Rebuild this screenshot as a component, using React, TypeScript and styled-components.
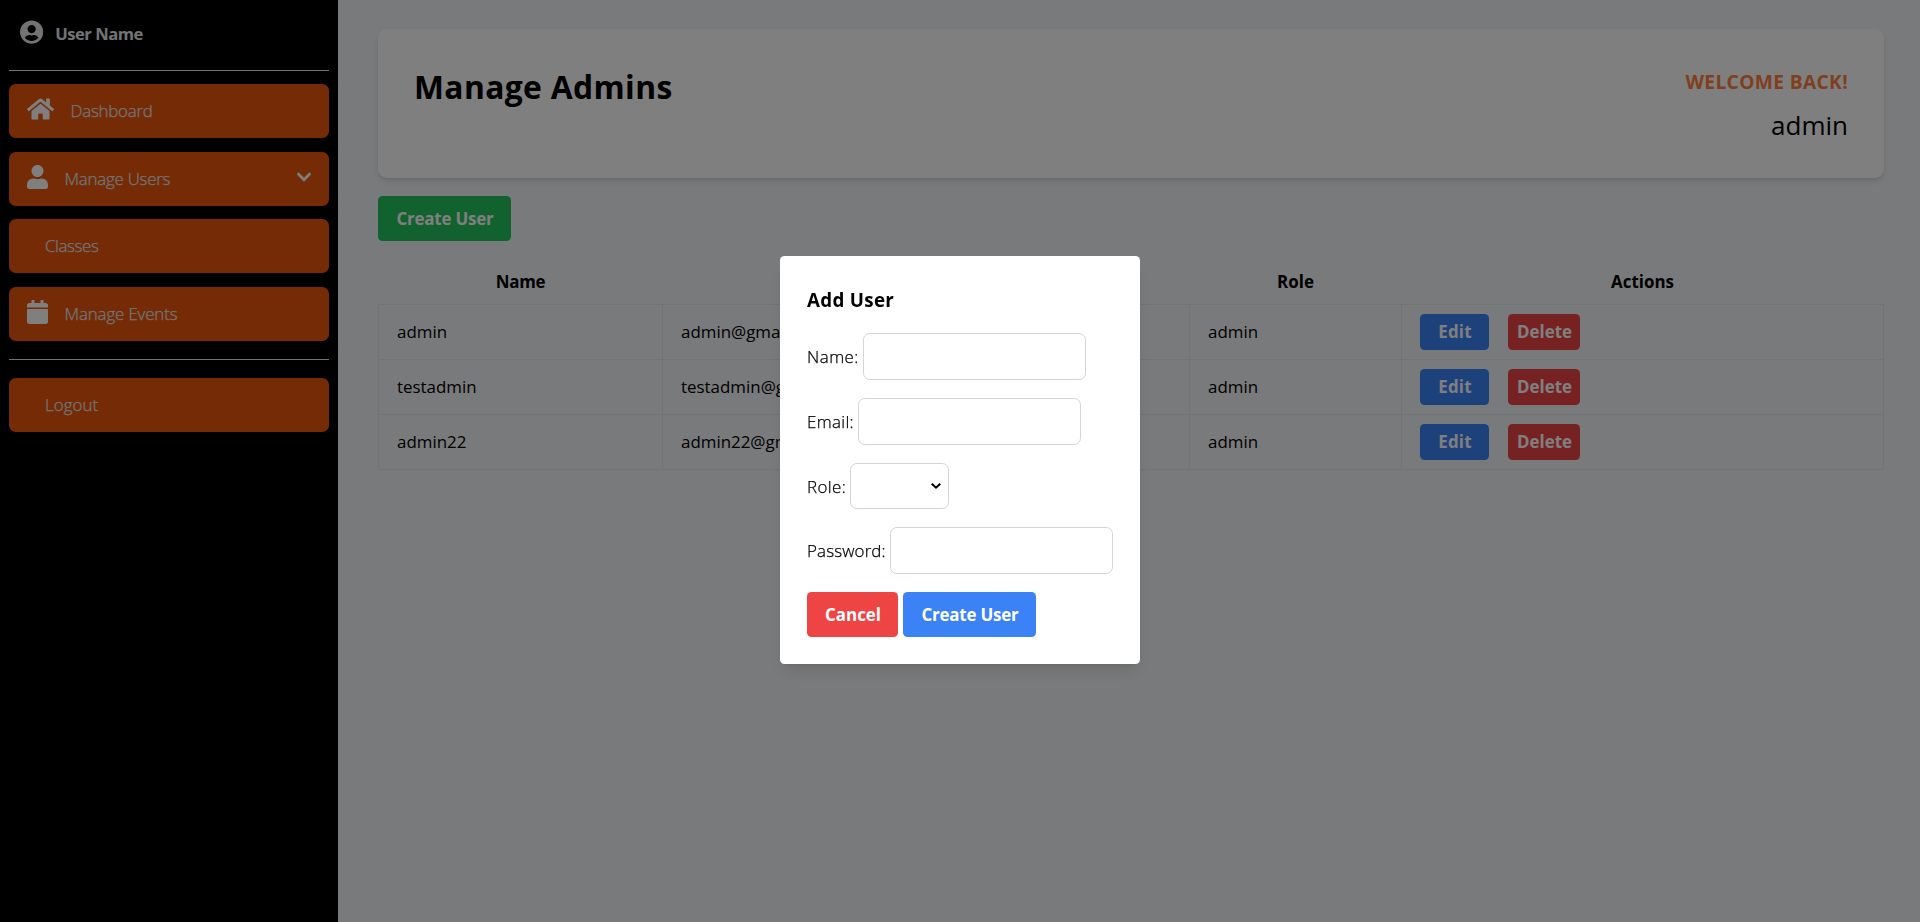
import React from "react";
import styled, { createGlobalStyle } from "styled-components";
import { FaCalendar, FaChevronDown, FaHome, FaUser, FaUserCircle } from "react-icons/fa";

const GlobalStyle = createGlobalStyle`
  *, *::before, *::after { box-sizing: border-box; }
  body {
    margin: 0;
    background: #f3f4f6;
    color: #000;
    font: 400 16.92px/27px "Open Sans", "Noto Sans", sans-serif;
  }
  h1, h2, h3, p { margin: 0; }
  button { font: inherit; }
`;

const Page = styled.div`
  display: flex;
  width: 100%;
  height: 100vh;
  overflow: hidden;
`;

/* Letter spacing in pixels, set per label. */
const Tracked = styled.span<{ $track?: number }>`
  letter-spacing: ${({ $track = 0 }) => $track}px;
  white-space: nowrap;
`;

const Sidebar = styled.aside`
  display: flex;
  flex-direction: column;
  flex: none;
  width: 338px;
  padding: 9px;
  background: #000;
  color: #e5e7eb;
`;

const Profile = styled.div`
  display: flex;
  align-items: flex-start;
  height: 61px;
  padding: 11px 0 0 11px;
  font-size: 16.6px;
  font-weight: 700;

  svg {
    width: 23.25px;
    height: 24px;
    margin: 0 12px 0 0;
  }
`;

const Divider = styled.hr<{ $top: number; $bottom: number }>`
  flex: none;
  width: 100%;
  height: 1px;
  margin: ${({ $top, $bottom }) => `${$top}px 0 ${$bottom}px`};
  border: 0;
  background: #e5e7eb;
`;

const NavList = styled.nav`
  display: flex;
  flex-direction: column;
  gap: 13.5px;
`;

const NavItem = styled.a<{ $indent?: boolean }>`
  display: flex;
  align-items: center;
  height: 54px;
  padding: 0 18px 0.5px ${({ $indent }) => ($indent ? 36 : 18)}px;
  border-radius: 6.75px;
  background: #ea580c;
  font-weight: 300;
  -webkit-text-stroke: 0.25px currentColor;
`;

const NavIcon = styled.span<{ $width?: number }>`
  display: flex;
  margin: 0 16.5px 3px 0;
  color: #fff;

  svg {
    width: ${({ $width = 21 }) => $width}px;
    height: 24px;
  }
`;

const NavCaret = styled.span`
  display: flex;
  margin: 0 0 2px auto;
  color: #fff;

  svg {
    width: 14px;
    height: 16px;
    stroke: currentColor;
    stroke-width: 16px;
  }
`;

const Main = styled.main`
  flex: 1;
  padding: 29px 36px 0 40px;
`;

const HeaderCard = styled.header`
  display: flex;
  justify-content: space-between;
  height: 149px;
  padding: 36px;
  border-radius: 9px;
  background: #fff;
  box-shadow: 0 4px 6px -1px rgba(0, 0, 0, 0.1), 0 2px 4px -2px rgba(0, 0, 0, 0.1);
`;

const Title = styled.h1`
  padding-top: 2px;
  font-size: 31.8px;
  font-weight: 700;
  line-height: 40.5px;
  letter-spacing: 0.35px;
`;

const Welcome = styled.div`
  display: flex;
  flex-direction: column;
  align-items: flex-end;
  gap: 8px;
`;

const Greeting = styled.p`
  padding-top: 1px;
  color: #ff7f3f;
  font-size: 19.2px;
  font-weight: 700;
  line-height: 31.5px;
  letter-spacing: 0.35px;
`;

const AccountName = styled.p`
  padding-top: 1px;
  font-size: 26px;
  line-height: 36px;
`;

const tones = { green: "#22c55e", blue: "#3b82f6", red: "#ef4444" };

const Button = styled.button<{ $tone: keyof typeof tones; $width: number; $small?: boolean }>`
  display: inline-flex;
  align-items: center;
  justify-content: center;
  width: ${({ $width }) => $width}px;
  height: ${({ $small }) => ($small ? 36 : 45)}px;
  padding: 0 0 0 1px;
  border: 0;
  border-radius: 4.5px;
  background: ${({ $tone }) => tones[$tone]};
  color: #fff;
  font-weight: 700;
`;

const Toolbar = styled.div`
  display: flex;
  margin: 18px 0;
`;

const Table = styled.table`
  width: 1505px;
  table-layout: fixed;
  border-collapse: collapse;
`;

const Column = styled.col<{ $width: number }>`
  width: ${({ $width }) => $width}px;
`;

const HeadCell = styled.th`
  height: 45px;
  padding: 0;
  font-weight: 700;
  text-align: center;
`;

const Cell = styled.td`
  height: 55px;
  padding: 0 18px;
  border: 1px solid #e5e7eb;
`;

const Actions = styled.div`
  display: flex;
  gap: 19px;
`;

const Overlay = styled.div`
  position: fixed;
  inset: 0;
  display: flex;
  align-items: center;
  justify-content: center;
  padding-bottom: 2px;
  background: rgba(0, 0, 0, 0.5);
`;

const Modal = styled.form`
  display: flex;
  flex-direction: column;
  width: 360px;
  height: 408px;
  padding: 27px;
  border-radius: 4.5px;
  background: #fff;
  box-shadow: 0 10px 15px -3px rgba(0, 0, 0, 0.1), 0 4px 6px -4px rgba(0, 0, 0, 0.1);
`;

const ModalTitle = styled.h3`
  margin-bottom: 17px;
  padding-top: 1px;
  font-size: 18.8px;
  font-weight: 700;
  line-height: 32px;
  letter-spacing: 0.3px;
`;

const Field = styled.label<{ $height?: number }>`
  display: flex;
  align-items: center;
  height: ${({ $height = 47 }) => $height}px;
  margin-bottom: 18px;
  font-weight: 300;
  -webkit-text-stroke: 0.25px currentColor;
`;

const FieldName = styled(Tracked)<{ $width: number }>`
  flex: none;
  width: ${({ $width }) => $width}px;
`;

const Input = styled.input`
  width: 223px;
  height: 47px;
  padding: 9px;
  border: 1px solid #d1d5db;
  border-radius: 6.75px;
  background: #fff;
  font: inherit;
  outline: none;
`;

const SelectBox = styled.span`
  display: flex;
  align-items: center;
  justify-content: flex-end;
  width: 99px;
  height: 46px;
  padding-right: 6px;
  border: 1px solid #d1d5db;
  border-radius: 6.75px;
`;

const ModalActions = styled.div`
  display: flex;
  gap: 5px;
`;

const users = [
  { name: "admin", email: "admin@gmail.com", role: "admin" },
  { name: "testadmin", email: "testadmin@gmail.com", role: "admin" },
  { name: "admin22", email: "admin22@gmail.com", role: "admin" },
];

export default function App() {
  return (
    <>
      <GlobalStyle />
      <Page>
        <Sidebar>
          <Profile>
            <FaUserCircle viewBox="0 0 496 512" />
            <Tracked $track={-0.5}>User Name</Tracked>
          </Profile>
          <Divider $top={0} $bottom={13} />
          <NavList>
            <NavItem>
              <NavIcon $width={27}><FaHome /></NavIcon>
              <Tracked $track={-0.25}>Dashboard</Tracked>
            </NavItem>
            <NavItem>
              <NavIcon><FaUser /></NavIcon>
              <Tracked $track={-0.25}>Manage Users</Tracked>
              <NavCaret><FaChevronDown /></NavCaret>
            </NavItem>
            <NavItem $indent>
              <Tracked $track={-0.4}>Classes</Tracked>
            </NavItem>
            <NavItem>
              <NavIcon><FaCalendar /></NavIcon>
              <Tracked $track={-0.15}>Manage Events</Tracked>
            </NavItem>
          </NavList>
          <Divider $top={18.5} $bottom={18} />
          <NavItem $indent>
            <Tracked $track={0.05}>Logout</Tracked>
          </NavItem>
        </Sidebar>

        <Main>
          <HeaderCard>
            <Title>Manage Admins</Title>
            <Welcome>
              <Greeting>WELCOME BACK!</Greeting>
              <AccountName>admin</AccountName>
            </Welcome>
          </HeaderCard>
          <Toolbar>
            <Button $tone="green" $width={133}>
              <Tracked $track={-0.2}>Create User</Tracked>
            </Button>
          </Toolbar>
          <Table>
            <colgroup>
              <Column $width={284} />
              <Column $width={527} />
              <Column $width={212} />
              <Column $width={482} />
            </colgroup>
            <thead>
              <tr>
                <HeadCell><Tracked $track={-0.3}>Name</Tracked></HeadCell>
                <HeadCell>Email</HeadCell>
                <HeadCell>Role</HeadCell>
                <HeadCell>Actions</HeadCell>
              </tr>
            </thead>
            <tbody>
              {users.map((user) => (
                <tr key={user.name}>
                  <Cell>{user.name}</Cell>
                  <Cell>{user.email}</Cell>
                  <Cell>{user.role}</Cell>
                  <Cell>
                    <Actions>
                      <Button $tone="blue" $width={69} $small>
                        <Tracked $track={0.2}>Edit</Tracked>
                      </Button>
                      <Button $tone="red" $width={72} $small>Delete</Button>
                    </Actions>
                  </Cell>
                </tr>
              ))}
            </tbody>
          </Table>
        </Main>
      </Page>

      <Overlay>
        <Modal>
          <ModalTitle>Add User</ModalTitle>
          <Field>
            <FieldName $width={56} $track={0.5}>Name:</FieldName>
            <Input type="text" />
          </Field>
          <Field>
            <FieldName $width={51} $track={0.35}>Email:</FieldName>
            <Input type="email" />
          </Field>
          <Field $height={46}>
            <FieldName $width={43} $track={0.4}>Role:</FieldName>
            <SelectBox>
              <svg width="12" height="8" viewBox="0 0 12 8" fill="none">
                <path d="M1.7 1.8 L6 5.7 L10.3 1.8" stroke="#000" strokeWidth="2.1" />
              </svg>
            </SelectBox>
          </Field>
          <Field>
            <FieldName $width={83} $track={0.15}>Password:</FieldName>
            <Input type="password" />
          </Field>
          <ModalActions>
            <Button type="button" $tone="red" $width={91}>Cancel</Button>
            <Button type="button" $tone="blue" $width={133}>
              <Tracked $track={-0.2}>Create User</Tracked>
            </Button>
          </ModalActions>
        </Modal>
      </Overlay>
    </>
  );
}
